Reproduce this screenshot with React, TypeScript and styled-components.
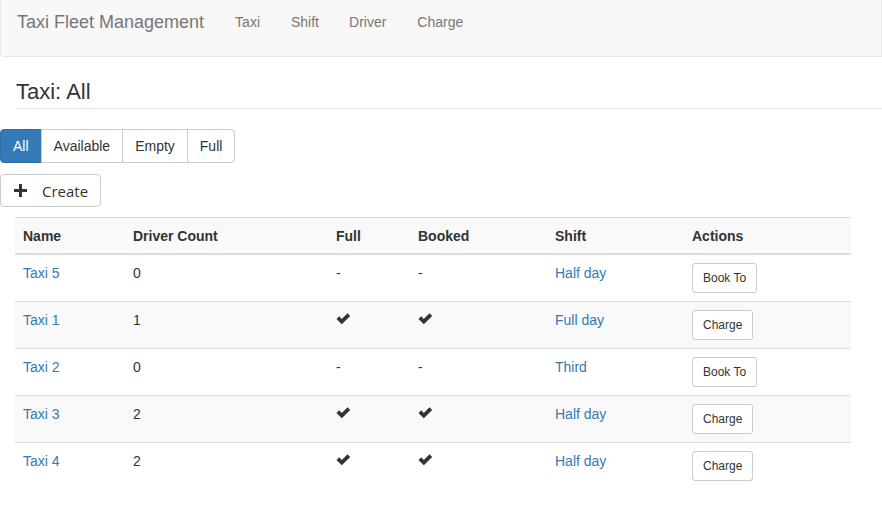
import styled, { createGlobalStyle } from "styled-components";

const GlobalStyle = createGlobalStyle`
    body {
        margin: 0;
        font-family: "Liberation Sans", Arial, sans-serif;
        font-size: 14px;
        color: #333;
        background: #fff;
    }
`;

const Navbar = styled.nav`
    height: 44px;
    background-color: #f8f8f8;
    border: 1px solid #e7e7e7;
    border-top: none;
    border-radius: 0 0 0 4px;
    display: flex;
    align-items: flex-start;
    padding: 12px 0 0 16px;
`;

const Brand = styled.a`
    font-size: 18px;
    line-height: 20px;
    color: #777;
    margin-right: 16px;
`;

const NavLink = styled.a`
    font-size: 14px;
    line-height: 20px;
    color: #777;
    padding: 0 15px;
    &:nth-child(3) { padding-left: 16px; }
    &:last-child { padding-left: 16px; }
`;

const PageHeader = styled.h3`
    margin: 23px 0 20px 16px;
    padding-bottom: 4px;
    font-size: 22px;
    font-weight: 400;
    line-height: 24px;
    border-bottom: 1px solid #e5e5e5;
`;

const ButtonGroup = styled.div`
    display: flex;
    margin-bottom: 11px;
`;

const GroupButton = styled.button<{ active?: boolean }>`
    font-family: "Liberation Sans", Arial, sans-serif;
    font-size: 14px;
    line-height: 20px;
    height: 34px;
    padding: 6px 12px;
    margin-left: -1px;
    border: 1px solid ${(p) => (p.active ? "#2e6da4" : "#ccc")};
    background: ${(p) => (p.active ? "#337ab7" : "#fff")};
    color: ${(p) => (p.active ? "#fff" : "#333")};
    border-radius: 0;

    &:first-child {
        margin-left: 0;
        border-radius: 4px 0 0 4px;
    }
    &:last-child {
        border-radius: 0 4px 4px 0;
    }
`;

const CreateButton = styled.button`
    display: flex;
    align-items: center;
    gap: 15px;
    height: 33px;
    padding: 0 12px 0 13px;
    border: 1px solid #ccc;
    border-radius: 4px;
    background: #fff;
    color: #333;
    font-family: "Open Sans", sans-serif;
    font-size: 15px;
    margin-bottom: 10px;
`;

const Table = styled.table`
    border-collapse: collapse;
    margin-left: 15px;
    width: 836px;
`;

const HeaderCell = styled.th`
    text-align: left;
    padding: 8px 8px 7px;
    line-height: 20px;
    font-weight: 700;
    background: #f9f9f9;
    border-top: 1px solid #ddd;
    border-bottom: 2px solid #ddd;
`;

const Row = styled.tr`
    &:nth-child(2n) {
        background-color: #f9f9f9;
    }
`;

const Cell = styled.td`
    padding: 8px;
    line-height: 20px;
    vertical-align: top;
    border-top: 1px solid #ddd;
    height: 30px;
`;

const Link = styled.a`
    color: #337ab7;
`;

const SmallButton = styled.button`
    font-family: "Liberation Sans", Arial, sans-serif;
    font-size: 12px;
    line-height: 18px;
    padding: 5px 10px;
    border: 1px solid #ccc;
    border-radius: 3px;
    background: #fff;
    color: #333;
`;

const Check = () => (
    <svg width="15" height="13" viewBox="0 0 15 13">
        <path d="M0.5 7 L3.2 4.3 L5.8 6.9 L11.5 1.2 L14.2 3.9 L5.8 12.3 Z" fill="#333" />
    </svg>
);

const Plus = () => (
    <svg width="13" height="13" viewBox="0 0 13 13">
        <path d="M5 0 H8 V5 H13 V8 H8 V13 H5 V8 H0 V5 H5 Z" fill="#333" />
    </svg>
);

const taxis = [
    { name: "Taxi 5", count: 0, full: false, booked: false, shift: "Half day", action: "Book To" },
    { name: "Taxi 1", count: 1, full: true, booked: true, shift: "Full day", action: "Charge" },
    { name: "Taxi 2", count: 0, full: false, booked: false, shift: "Third", action: "Book To" },
    { name: "Taxi 3", count: 2, full: true, booked: true, shift: "Half day", action: "Charge" },
    { name: "Taxi 4", count: 2, full: true, booked: true, shift: "Half day", action: "Charge" },
];

const widths = [110, 203, 82, 137, 137, 167];

export default function App() {
    return (
        <>
            <GlobalStyle />
            <Navbar>
                <Brand>Taxi Fleet Management</Brand>
                <NavLink>Taxi</NavLink>
                <NavLink>Shift</NavLink>
                <NavLink>Driver</NavLink>
                <NavLink>Charge</NavLink>
            </Navbar>
            <PageHeader>Taxi: All</PageHeader>
            <ButtonGroup>
                <GroupButton active>All</GroupButton>
                <GroupButton>Available</GroupButton>
                <GroupButton>Empty</GroupButton>
                <GroupButton>Full</GroupButton>
            </ButtonGroup>
            <CreateButton>
                <Plus />
                Create
            </CreateButton>
            <Table>
                <thead>
                    <tr>
                        {["Name", "Driver Count", "Full", "Booked", "Shift", "Actions"].map((h, i) => (
                            <HeaderCell key={h} style={{ width: widths[i] - 16 }}>{h}</HeaderCell>
                        ))}
                    </tr>
                </thead>
                <tbody>
                    {taxis.map((t) => (
                        <Row key={t.name}>
                            <Cell><Link>{t.name}</Link></Cell>
                            <Cell>{t.count}</Cell>
                            <Cell>{t.full ? <Check /> : "-"}</Cell>
                            <Cell>{t.booked ? <Check /> : "-"}</Cell>
                            <Cell><Link>{t.shift}</Link></Cell>
                            <Cell><SmallButton>{t.action}</SmallButton></Cell>
                        </Row>
                    ))}
                </tbody>
            </Table>
        </>
    );
}
